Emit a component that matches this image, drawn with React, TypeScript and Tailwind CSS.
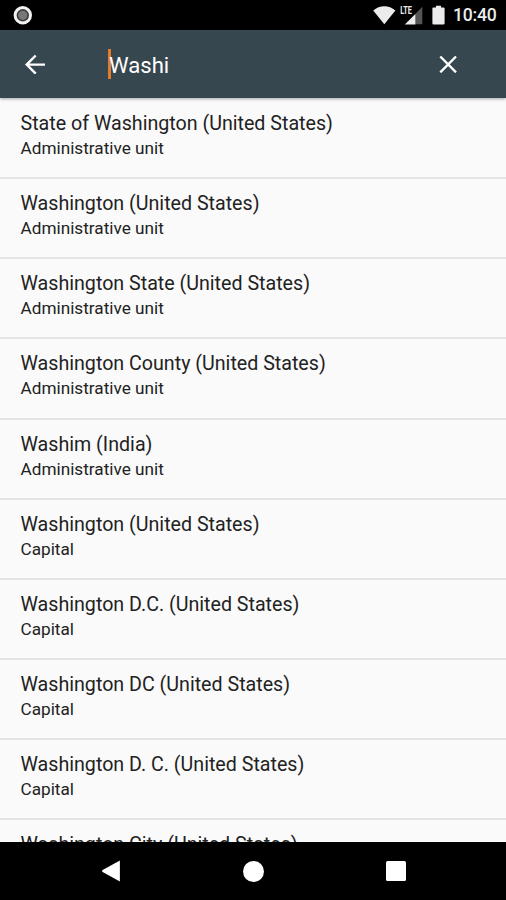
interface Place {
  name: string;
  kind?: string;
}

const places: Place[] = [
  { name: 'State of Washington (United States)', kind: 'Administrative unit' },
  { name: 'Washington (United States)', kind: 'Administrative unit' },
  { name: 'Washington State (United States)', kind: 'Administrative unit' },
  { name: 'Washington County (United States)', kind: 'Administrative unit' },
  { name: 'Washim (India)', kind: 'Administrative unit' },
  { name: 'Washington (United States)', kind: 'Capital' },
  { name: 'Washington D.C. (United States)', kind: 'Capital' },
  { name: 'Washington DC (United States)', kind: 'Capital' },
  { name: 'Washington D. C. (United States)', kind: 'Capital' },
  { name: 'Washington City (United States)' },
];

function StatusBar() {
  return (
    <div className="flex h-[29.5px] shrink-0 items-center justify-between bg-black pl-[13px] pr-[9px]">
      <svg className="h-5 w-5" viewBox="0 0 20 20">
        <circle cx="9.8" cy="10.3" r="7.7" fill="#3c3c3c" stroke="#f2f2f2" strokeWidth="3" />
        <circle cx="9.8" cy="10.3" r="4.6" fill="#777" />
      </svg>
      <div className="flex items-center text-[#ececec]">
        {/* Wifi, LTE signal, battery */}
        <svg className="h-[29px] w-[80px]" viewBox="0 0 80 29" fill="currentColor">
          <path d="M0.2 10.5 C6.6 4.7 16 4.7 22.4 10.5 L11.3 24.2 Z" />
          <text x="27.2" y="14.4" fontSize="10.5" fontWeight="700" fontFamily="Roboto, sans-serif" textLength="11.8" lengthAdjust="spacingAndGlyphs">
            LTE
          </text>
          <path d="M49.3 6.8 V24.2 H42 V14.2 Z" fill="#555" />
          <path d="M31.8 24.5 L42.3 14 V24.5 Z" />
          <path d="M60.5 7.5 H63 V5.7 H68 V7.5 H70.5 Q71.6 7.5 71.6 8.6 V23.3 Q71.6 24.5 70.5 24.5 H60.5 Q59.4 24.5 59.4 23.3 V8.6 Q59.4 7.5 60.5 7.5 Z" />
        </svg>
        <span className="w-[44px] pt-[3px] text-[17.6px] leading-none font-medium tracking-[-0.2px]">10:40</span>
      </div>
    </div>
  );
}

function SearchBar() {
  return (
    <header className="z-10 flex h-[68.5px] shrink-0 items-center bg-[#37474f] pl-[25px] text-white shadow-[0_1px_3px_rgba(0,0,0,0.35)]">
      <svg className="h-[20px] w-[20px]" viewBox="0 0 20 20" fill="none" stroke="currentColor" strokeWidth="2.4">
        <path d="M20 10.6 H2 M10.7 1.5 L1.7 10.6 L10.7 19.7" />
      </svg>
      <div className="ml-[63px] flex flex-1 items-center">
        <span className="h-[30px] w-[2.5px] bg-[#e07c2c]" />
        <span className="-ml-[1.5px] pt-[2px] text-[22.1px] leading-none">Washi</span>
      </div>
      <svg className="mr-[49px] h-[18px] w-[18px]" viewBox="0 0 18 18" fill="none" stroke="currentColor" strokeWidth="2.4">
        <path d="M1.3 1.5 L17 17.3 M17 1.5 L1.3 17.3" />
      </svg>
    </header>
  );
}

function PlaceRow({ name, kind }: Place) {
  return (
    <li className="h-[80.15px] shrink-0 border-b-2 border-[#e5e5e5] pt-[11px] pl-[20.5px]">
      <div className="text-[19.65px] leading-[27px] text-[#222]">{name}</div>
      <div className="text-[17.2px] leading-[23px] text-[#222]">{kind}</div>
    </li>
  );
}

function NavigationBar() {
  return (
    <nav className="flex h-[58px] shrink-0 items-center justify-between bg-black pr-[100px] pl-[101px] text-white">
      <svg className="h-[22px] w-[20px]" viewBox="0 0 20 22" fill="currentColor">
        <path d="M18.9 0.6 V21.4 L1.6 12 Q0.4 11 1.6 10 Z" />
      </svg>
      <span className="h-[21px] w-[21px] rounded-full bg-white" />
      <span className="h-[20px] w-[20px] rounded-[1.5px] bg-white" />
    </nav>
  );
}

export default function App() {
  return (
    <div className="flex h-[900px] w-[506px] flex-col overflow-hidden bg-[#fafafa] font-['Roboto',sans-serif]">
      <StatusBar />
      <SearchBar />
      <ul className="flex min-h-0 flex-1 flex-col overflow-hidden pt-[1px]">
        {places.map((place, i) => (
          <PlaceRow key={i} {...place} />
        ))}
      </ul>
      <NavigationBar />
    </div>
  );
}
